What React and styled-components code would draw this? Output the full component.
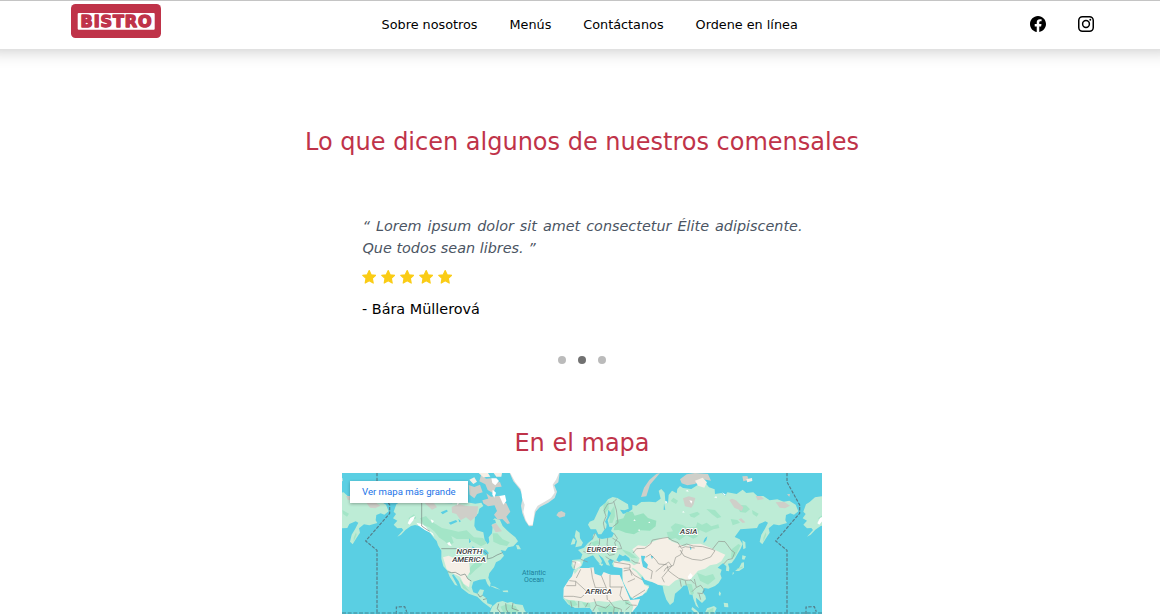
import React from "react";
import styled, { createGlobalStyle } from "styled-components";

const GlobalStyle = createGlobalStyle`
  * { box-sizing: border-box; }
  body { margin: 0; background: #fff; overflow: hidden; font-family: "DejaVu Sans", sans-serif; color: #000; }
  h2, p, blockquote { margin: 0; font-weight: 400; }
`;

const Page = styled.div`
  height: 614px;
  overflow: hidden;
`;
const Header = styled.header`
  height: 49px;
  display: flex;
  align-items: flex-start;
  justify-content: space-between;
  padding: 3px 66px 0 71px;
  border-top: 1px solid #c4c4c4;
  background: #fff;
  box-shadow: 0 -16px 17px 16px rgba(0, 0, 0, 0.25);
`;
const Logo = styled.svg`
  display: block;
  width: 90px;
  height: 34px;
`;
const LogoText = styled.text`
  font-family: "DejaVu Sans", sans-serif;
  font-size: 16px;
  font-weight: 700;
  fill: #bf3349;
  stroke: #bf3349;
  stroke-width: 1.4px;
  stroke-linejoin: round;
`;
const Nav = styled.nav`
  display: flex;
  gap: 32px;
  margin: 13px 0 0 -11.7px;
`;
const NavLink = styled.a`
  font-size: 12.8px;
  line-height: 16px;
  white-space: nowrap;
`;
const Social = styled.div`
  display: flex;
  gap: 32px;
  margin-top: 12px;
`;
const SocialIcon = styled.svg`
  display: block;
  width: 16px;
  height: 16px;
`;
const Main = styled.main`
  display: flex;
  flex-direction: column;
  align-items: center;
  padding: 77px 0 0 4px;
`;
const Title = styled.h2`
  font-size: 24px;
  line-height: 32px;
  color: #bf3349;
`;
const Review = styled.section`
  width: 440px;
  margin-top: 57px;
`;
const Quote = styled.blockquote`
  margin: 0 -0.5px 0 0.5px;
  font-size: 14.4px;
  line-height: 22px;
  font-style: italic;
  text-align: justify;
  color: #4b5563;
`;
const Stars = styled.div`
  display: flex;
  gap: 4.6px;
  margin-top: 11px;
`;
const StarIcon = styled.svg`
  display: block;
  width: 14.4px;
  height: 14.4px;
`;
const Author = styled.p`
  margin-top: 14px;
  font-size: 14.4px;
  line-height: 22px;
`;
const Dots = styled.div`
  display: flex;
  gap: 12px;
  margin: 36px 0 63px;
`;
const Dot = styled.span`
  width: 8px;
  height: 8px;
  border-radius: 50%;
  background: ${(p) => (p.$active ? "#717171" : "#bbb")};
`;
const MapFrame = styled.section`
  position: relative;
  width: 480px;
  height: 141px;
  margin-top: 14px;
  overflow: hidden;
`;
const MapDrawing = styled.svg`
  display: block;
  width: 480px;
  height: 141px;
`;
const MapButton = styled.a`
  position: absolute;
  top: 8px;
  left: 8px;
  padding: 0 12px;
  height: 22px;
  width: 118px;
  white-space: nowrap;
  line-height: 22px;
  font-family: Roboto, sans-serif;
  font-size: 9.6px;
  color: #1a73e8;
  background: #fff;
  box-shadow: 0 1px 3px rgba(0, 0, 0, 0.3);
`;
const MapLabel = styled.text`
  font-family: Roboto, sans-serif;
  font-size: ${(p) => (p.$ocean ? 21 : 24)}px;
  font-style: ${(p) => (p.$ocean ? "normal" : "italic")};
  font-weight: ${(p) => (p.$ocean ? 400 : 500)};
  text-anchor: middle;
  fill: ${(p) => (p.$ocean ? "#1c7f98" : "#3a3a3a")};
  stroke: ${(p) => (p.$ocean ? "none" : "#fff")};
  stroke-width: 6px;
  stroke-linejoin: round;
  paint-order: stroke;
`;

const links = ["Sobre nosotros", "Menús", "Contáctanos", "Ordene en línea"];

const SEA = "#5acfe3";
const LAND = "#bdecd6";
const FOREST = "#a3e5c7";
const SAND = "#f5efe6";
const ROCK = "#cfcfc9";

function Star() {
  return (
    <StarIcon viewBox="0 0 24 24" fill="#facc15" stroke="#facc15" strokeWidth="1.9" strokeLinejoin="round">
      <path d="M12 1 L15.3 7.9 L22.8 8.9 L17.3 14.1 L18.7 21.8 L12 18.1 L5.3 21.8 L6.7 14.1 L1.2 8.9 L8.7 7.9Z" />
    </StarIcon>
  );
}

function Americas() {
  return (
    <g strokeLinejoin="round">
      <path fill={LAND} d="M155,125 L163,103 174,96 190,82 210,79 238,92 280,98 330,100 345,94 375,97 400,101 418,98 424,108 412,116 409,130 399,140 397,168 404,181 424,187 428,210 437,223 442,216 440,202 450,190 452,168 449,154 458,145 474,150 482,168 494,180 505,190 520,202 528,214 514,229 498,232 490,243 476,240 486,257 475,270 462,277 456,292 442,310 439,323 446,340 443,351 436,342 430,327 412,329 394,335 389,352 394,367 406,371 414,358 426,360 421,376 433,385 436,400 451,405 446,414 423,397 406,380 380,371 358,354 350,334 334,313 330,316 341,337 347,347 339,345 323,320 316,302 304,289 298,266 298,242 288,226 284,213 276,205 264,188 246,178 235,169 219,165 207,168 191,179 177,194 166,200 184,180 179,174 166,175 155,164 166,152 153,145 162,132Z" />
      <path fill={LAND} d="M442,432 L450,410 465,397 482,393 496,398 508,396 520,402 542,405 549,423 560,432Z M526,238 L522,225 530,226 537,238Z" />
      <path fill={FOREST} d="M234,145 L252,138 265,153 282,163 300,174 328,180 349,185 374,181 396,202 423,204 435,220 417,229 400,219 379,207 344,207 328,198 335,218 322,226 306,212 292,203 278,185 262,172 246,166Z M388,287 L405,274 424,268 419,285 400,300 385,315 374,310Z M452,190 L466,190 482,208 503,217 495,228 474,224 454,215Z M475,410 L495,402 521,408 529,425 509,432 485,428Z M352,325 L371,350 385,367 363,354Z M199,145 L216,133 223,145 208,151Z" />
      <path fill={SAND} d="M303,262 L320,257 341,266 372,267 382,281 384,306 374,321 384,332 381,352 365,341 354,320 332,310 314,298Z" />
      <path fill={ROCK} d="M329,111 L350,102 372,108 409,109 404,137 386,153 372,142 356,151 343,132 330,128Z M421,91 L448,83 468,91 462,105 438,109 424,100Z M448,165 L462,159 470,170 480,184 461,187Z M248,99 L276,100 285,112 270,119Z M455,100 L478,92 493,100 505,125 493,140 504,160 496,162 481,147 467,149 456,134 465,123Z" />
      <path fill={ROCK} d="M380,45 L397,51 414,44 422,67 405,72 397,85 383,74Z M418,13 L432,26 448,25 456,39 474,36 479,50 461,52 454,70 437,60 430,43 412,34Z M433,70 L447,80 473,77 488,90 478,102 461,94 451,106 440,89Z" />
      <path fill="#fff" d="M205,144 L219,137 214,151 203,164 197,160Z M223,158 L240,162 252,171 261,182 272,190 277,200 266,188 250,181 230,167Z M448,25 L463,25 471,33 460,46 451,39Z M472,78 L489,75 493,93 484,104Z M452,59 L462,68 457,83 451,74Z M266,148 L276,153 270,160Z M344,94 L351,100 346,106Z M315,219 L323,216 329,228 320,226Z" />
      <path fill={SAND} d="M382,29 L397,22 405,35 394,42Z M410,9 L438,9 445,20 424,22Z M455,9 L480,9 478,20 463,20Z" />
      <path fill={SEA} d="M296,127 L314,119 318,124 302,133Z M320,158 L342,150 346,155 326,164Z M349,146 L357,154 352,157Z M391,229 L400,235 391,238Z M416,237 L432,239 441,250 430,256 420,247Z M382,205 L387,215 381,219Z M444,150 L459,149 462,158 451,163Z" />
      <path fill="none" stroke="#7d8f88" strokeWidth="2.2" d="M239,92 V168 L252,177 263,184 M298,236 H394 L408,242 425,243 437,254 436,267 451,263 465,255 482,248 M317,305 L329,308 340,307 356,316 369,312 378,327 388,333 M407,371 L414,381 422,376 M470,401 L466,416 477,430 M491,400 L493,418 500,430 M513,399 L510,415 530,422 M423,389 L434,386" />
      <path fill={LAND} d="M440,346 L459,350 475,359 460,355Z M481,362 L497,361 499,367 484,366Z" />
    </g>
  );
}

function Eurasia() {
  return (
    <g transform="translate(474 0)" strokeLinejoin="round">
      <path fill={LAND} d="M272,178 L264,164 269,155 282,150 290,133 300,112 316,99 324,88 338,81 352,84 366,92 384,103 386,116 374,121 360,119 369,132 383,128 397,118 397,104 409,107 424,96 448,95 467,97 482,86 476,62 484,57 494,68 496,93 504,100 506,75 516,62 530,70 532,57 540,48 549,54 574,57 593,45 616,38 627,52 644,58 645,72 665,69 676,77 682,67 710,72 728,59 739,69 760,67 772,78 790,78 809,91 832,88 851,95 868,92 887,104 895,124 882,134 871,130 858,135 856,151 861,159 837,166 821,163 806,175 809,188 798,205 787,223 779,215 784,194 794,178 804,158 796,154 777,162 771,174 742,176 721,178 704,201 719,208 728,222 722,236 713,251 704,267 695,279 684,281 688,294 687,304 678,302 679,289 669,280 662,285 653,293 665,299 661,312 665,324 656,339 645,348 625,356 613,354 607,366 616,377 618,387 606,399 595,389 588,383 589,397 597,415 588,407 580,386 577,373 569,374 562,346 550,347 542,357 525,371 521,396 510,405 499,389 491,365 488,348 474,344 469,338 450,335 433,328 426,319 423,326 433,342 448,347 440,367 422,377 400,386 392,382 379,354 368,334 367,316 369,294 355,291 341,291 336,281 342,272 331,266 324,273 330,287 320,285 309,265 295,253 306,273 302,284 290,271 279,256 265,261 252,267 246,286 234,300 219,297 214,287 217,270 242,268 247,253 234,240 252,233 264,219 278,208 279,195 286,189 294,204 306,207 323,204 336,202 342,190 333,183 338,171 323,170 314,178 304,193 295,193 288,178Z" />
      <path fill={LAND} d="M228,180 L239,188 240,205 249,218 244,228 226,232 231,214 224,199Z M219,204 L227,210 224,222 212,224Z M295,281 L310,281 306,289Z" />
      <path fill={SAND} d="M222,300 L242,294 265,294 281,292 284,311 304,318 311,306 332,314 359,315 367,333 381,367 391,390 420,387 413,406 392,432 282,432 270,413 249,411 226,413 205,402 190,382 191,354 207,329 216,319Z" />
      <path fill={LAND} d="M188,383 L209,391 243,393 261,399 295,393 333,397 360,391 388,392 400,409 394,432 282,432 270,413 226,414 204,403Z M221,301 L236,297 224,313Z" />
      <path fill={FOREST} d="M198,389 L224,392 233,405 213,410Z M246,397 L269,399 272,413 254,409Z M292,413 L330,407 360,415 353,430 301,430Z M374,390 L391,398 377,406Z" />
      <path fill={SAND} d="M397,238 L414,226 438,229 455,217 483,205 501,202 514,214 534,221 552,229 569,223 602,221 638,236 666,250 676,254 664,274 650,282 630,286 615,296 594,302 580,319 566,332 545,324 525,332 507,348 488,345 474,344 452,334 435,329 428,318 408,299 394,290 414,280 419,265 407,252Z M341,277 L364,271 393,279 403,287 395,297 409,306 424,325 433,344 447,352 428,376 400,386 391,378 377,350 369,332 367,295 343,291Z M216,272 L241,275 244,286 226,298Z" />
      <path fill="#96e1bf" d="M348,151 L370,145 379,126 398,125 404,137 430,130 444,144 469,152 467,169 450,182 423,181 402,193 377,188 356,180 341,181Z" />
      <path fill={FOREST} d="M500,187 L519,184 512,171 526,160 548,165 560,172 588,170 592,157 606,164 620,158 634,169 655,163 658,174 640,178 618,188 599,180 592,200 580,206 559,196 538,211 526,204 507,210Z M512,93 L520,83 534,92 528,102Z M568,133 L592,125 600,132 583,143 572,140Z M619,117 L645,120 664,141 652,145 636,133Z M692,147 L712,150 720,158 698,166Z M711,105 L738,106 750,118 737,128 720,126Z M756,120 L776,131 770,140 758,132Z M310,104 L326,93 326,117 312,133Z M330,127 L343,107 345,139 337,159 328,159Z M591,308 L617,318 639,312 646,326 624,344 600,332Z M695,238 L715,222 722,226 706,258 693,266Z M790,203 L797,187 799,194 790,215Z M560,341 L575,343 582,370 574,376Z M364,237 L390,247 413,265 395,264 376,250Z M272,218 L292,211 301,220 282,228Z" />
      <path fill={ROCK} d="M549,85 L566,79 586,84 581,103 574,113 555,109Z M688,90 L696,86 708,91 730,112 725,123 703,113Z M767,78 L783,78 792,87 773,91Z M827,97 L852,95 870,107 855,115 839,113Z M540,28 L560,13 585,9 624,12 633,32 610,28 584,42 562,46 545,40Z M727,19 L742,18 746,29 730,34Z M423,81 L432,53 448,30 469,12 480,9 450,44 439,79Z M175,127 L184,123 196,129 195,139 179,143 169,136Z M861,73 L870,72 868,80Z M716,148 L724,145 736,157 728,159Z" />
      <path fill={SAND} d="M585,32 L608,23 621,37 613,53 594,47Z M739,28 L756,24 757,33 742,37Z" />
      <path fill={SEA} d="M325,119 L333,130 323,151 328,170 318,180 320,163 315,155 322,141Z M358,253 L369,259 376,255 388,264 391,274 369,271 357,276 349,271Z M423,257 L436,258 432,271 444,284 440,296 429,290 425,273Z M452,257 L460,259 456,268Z M611,213 L615,205 622,199 619,211 611,220Z M569,226 L575,237 571,240Z M492,100 L496,119 491,120Z" />
      <path fill={LAND} d="M727,211 L736,217 737,234 730,238Z M727,256 L738,259 733,269 726,268Z M732,277 L732,293 717,303 705,303 717,294 725,278Z M699,305 L702,310 697,315Z M658,364 L663,370 660,379 656,373Z M671,398 L684,400 685,412 673,411Z M577,411 L591,422 599,432 588,432 574,418Z M614,431 L621,415 642,408 650,414 642,432Z" />
      <path fill={FOREST} d="M619,423 L640,413 640,432 622,432Z M708,298 L728,289 727,294Z" />
      <path fill="#fff" d="M563,320 L571,309 578,316 575,325 567,329Z M568,91 L577,93 574,101Z M496,92 L503,96 497,101Z M546,127 L550,123 554,128Z M666,67 L673,76 678,74Z M229,274 L240,276 238,282Z M400,152 L404,148 407,153Z M413,181 L418,178 421,183Z M444,157 L449,155 451,160Z M556,63 L563,60 566,65Z M642,82 L649,79 651,85Z" />
      <path fill="none" stroke="#8b928e" strokeWidth="1.8" d="M314,178 L310,159 318,139 312,121 323,102 337,99 350,87 M338,171 L354,158 349,120 341,94 M273,218 L267,227 M286,189 L277,208 M299,205 L298,224 284,238 M242,268 L263,276 M216,275 L227,276 222,296 M323,204 L321,225 338,238 365,236 M342,190 L352,205 344,218 351,238 M284,238 L312,239 328,256 344,253 M317,260 L335,272 M250,244 L266,251 285,248 M365,236 L358,217 337,204" />
      <path fill="none" stroke="#8b8d86" strokeWidth="1.8" d="M399,249 L410,236 434,235 452,222 457,210 474,207 504,202 516,211 534,218 544,235 556,230 584,234 M394,270 L406,278 420,280 M437,262 L451,253 467,269 476,282 500,284 M441,294 L457,303 453,327 M467,305 L489,287 506,276 515,288 500,306 486,323 493,337 M342,276 L390,284 390,294 371,295 M371,303 L389,299 403,316 426,329 M389,296 L396,317 M383,336 L405,326 M398,383 L413,374 435,360 M492,304 L498,294 520,286 527,262 542,254 548,238 M535,231 L560,222 580,228 608,230 637,238 645,242 632,261 604,271 577,268 552,258 540,240 M637,238 L656,214 675,215 694,241 704,248 697,266 683,269 671,282 M502,287 L505,302 519,313 536,325 555,331 573,330 583,341 M583,327 L589,352 576,365 M590,352 L602,346 613,360 607,371 592,369 M597,371 L602,389 M540,329 L544,350 M556,333 L559,346 M208,332 L227,334 227,347 199,347 M227,334 L262,366 243,383 M242,298 L229,324 M273,294 L277,322 286,353 265,370 M304,317 L319,354 M330,315 V351 H370 M319,354 L286,353 M319,354 L322,390 M365,351 L360,376 370,392 386,391 M191,379 H220 L243,383 M212,394 L216,414 M236,393 V413 M264,398 L256,412 M282,386 L289,405 278,424 M289,405 L317,414 330,403 M326,390 L342,411 364,418 364,432 M343,411 L340,432 M377,398 L391,405 410,406 M389,409 L377,420" />
    </g>
  );
}

function WorldMap() {
  return (
    <MapDrawing viewBox="0 9 1440 423">
      <defs>
        <g id="americas"><Americas /></g>
        <g id="eurasia"><Eurasia /></g>
      </defs>
      <rect y="9" width="1440" height="423" fill={SEA} />
      <use href="#eurasia" x="-1229" />
      <use href="#americas" />
      <use href="#eurasia" />
      <use href="#americas" x="1229" />
      <g transform="translate(474 0)">
        <path fill="#d9dedd" d="M29,9 H179 L175,37 163,46 171,65 164,84 145,98 120,111 107,125 102,148 98,168 87,169 76,153 67,130 63,107 69,79 59,57 40,34Z" />
        <path fill="#fff" d="M31,9 H177 L168,29 158,44 164,68 153,84 134,95 113,107 104,122 98,164 86,165 77,149 70,126 74,104 66,83 63,58 45,35Z" />
      </g>
      <g fill="none" stroke="#557d88" strokeWidth="3.5" strokeDasharray="10 4">
        <path d="M105,9 V40 L143,105 V130 L71,213 105,241 V432 M163,432 V411 L188,410 194,425" />
        <path d="M1335,9 V36 L1373,105 V130 L1301,213 1335,241 V432 M1392,432 V411 L1417,410 1423,425" />
      </g>
      <path d="M0,429 H1440" stroke="#4a9eae" strokeWidth="5" strokeDasharray="12 5" />
      <MapLabel x="382" y="252">NORTH</MapLabel>
      <MapLabel x="381" y="275">AMERICA</MapLabel>
      <MapLabel x="778" y="245">EUROPE</MapLabel>
      <MapLabel x="770" y="371">AFRICA</MapLabel>
      <MapLabel x="1040" y="192">ASIA</MapLabel>
      <MapLabel $ocean x="576" y="315">Atlantic</MapLabel>
      <MapLabel $ocean x="576" y="336">Ocean</MapLabel>
    </MapDrawing>
  );
}

export default function App() {
  return (
    <Page>
      <GlobalStyle />
      <Header>
        <Logo viewBox="0 0 90 34" role="img" aria-label="Bistro">
          <rect width="90" height="34" rx="4.5" fill="#bf3349" />
          <rect x="6.7" y="9" width="77" height="16.7" rx="1" fill="#fff" />
          <LogoText x="9.6" y="23.3" textLength="71">BISTRO</LogoText>
        </Logo>
        <Nav>
          {links.map((label) => <NavLink key={label}>{label}</NavLink>)}
        </Nav>
        <Social>
          <SocialIcon viewBox="0 0 16 16">
            <path d="M16 8.049c0-4.446-3.582-8.05-8-8.05C3.58 0-.002 3.603-.002 8.05c0 4.017 2.926 7.347 6.75 7.951v-5.625h-2.03V8.05H6.75V6.275c0-2.017 1.195-3.131 3.022-3.131.876 0 1.791.157 1.791.157v1.98h-1.009c-.993 0-1.303.621-1.303 1.258v1.51h2.218l-.354 2.326H9.25V16c3.824-.604 6.75-3.934 6.75-7.951" />
          </SocialIcon>
          <SocialIcon viewBox="0 0 16 16" fill="none" stroke="#000" strokeWidth="1.5">
            <rect x=".75" y=".75" width="14.5" height="14.5" rx="3.7" />
            <circle cx="8" cy="8" r="3.4" />
            <circle cx="12.3" cy="3.7" r=".95" fill="#000" stroke="none" />
          </SocialIcon>
        </Social>
      </Header>
      <Main>
        <Title>Lo que dicen algunos de nuestros comensales</Title>
        <Review>
          <Quote>“ Lorem ipsum dolor sit amet consectetur Élite adipiscente. Que todos sean libres. ”</Quote>
          <Stars>{[1, 2, 3, 4, 5].map((n) => <Star key={n} />)}</Stars>
          <Author>- Bára Müllerová</Author>
        </Review>
        <Dots><Dot /><Dot $active /><Dot /></Dots>
        <Title>En el mapa</Title>
        <MapFrame>
          <WorldMap />
          <MapButton>Ver mapa más grande</MapButton>
        </MapFrame>
      </Main>
    </Page>
  );
}
